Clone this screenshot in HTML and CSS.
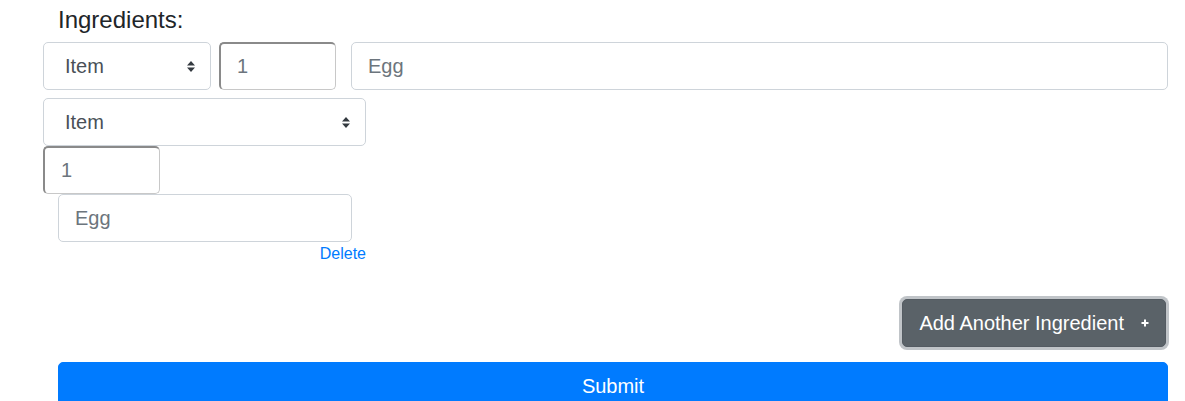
FILE: index.html
```html
<!DOCTYPE html>
<html>
<head>
<meta charset="utf-8">
<link rel="stylesheet" href="styles.css">
</head>
<body>
<form class="page">
  <label class="title">Ingredients:</label>

  <div class="row-wide">
    <span class="select-wrap sel-sm">
      <select class="field select"><option>Item</option></select>
      <svg class="caret" width="8" height="11" viewBox="0 0 8 11"><path d="M4 0 L8 4.5 L0 4.5 Z M4 11 L8 6.5 L0 6.5 Z" fill="#343a40"/></svg>
    </span>
    <input class="field qty" type="text" placeholder="1">
    <input class="field name grow" type="text" placeholder="Egg">
  </div>

  <div class="stack">
    <span class="select-wrap sel-lg">
      <select class="field select"><option>Item</option></select>
      <svg class="caret" width="8" height="11" viewBox="0 0 8 11"><path d="M4 0 L8 4.5 L0 4.5 Z M4 11 L8 6.5 L0 6.5 Z" fill="#343a40"/></svg>
    </span>
    <input class="field qty" type="text" placeholder="1">
    <input class="field name short" type="text" placeholder="Egg">
    <a class="delete" href="#">Delete</a>
  </div>

  <div class="actions">
    <button type="button" class="btn btn-add">Add Another Ingredient
      <svg class="plus" width="8" height="8" viewBox="0 0 8 8"><path d="M4 0.5 V7.5 M0.5 4 H7.5" stroke="#fff" stroke-width="2"/></svg>
    </button>
  </div>

  <button type="button" class="btn btn-submit">Submit</button>
</form>
</body>
</html>
```

FILE: styles.css
```css
* { box-sizing: border-box; }
body {
  margin: 0;
  background: #fff;
  font-family: "Liberation Sans", Arial, sans-serif;
  color: #212529;
}
.page {
  width: 1168px;
  padding-left: 43px;
  display: flex;
  flex-direction: column;
}
.title {
  display: block;
  margin: 5px 0 8px 15px;
  font-size: 24px;
  line-height: 29px;
  color: #212529;
}
.field {
  height: 48px;
  font-family: inherit;
  font-size: 20px;
  color: #495057;
  background: #fff;
  border: 1px solid #ced4da;
  border-radius: 5px;
  padding: 0 16px;
  outline: none;
  margin: 0;
}
.field::placeholder { color: #6c757d; opacity: 1; }
.select {
  -webkit-appearance: none;
  appearance: none;
  width: 100%;
  padding-left: 21px;
  color: #495057;
}
.select-wrap { position: relative; display: block; }
.caret { position: absolute; right: 16px; top: 19px; pointer-events: none; }
.sel-sm { width: 168px; flex: none; }
.sel-lg { width: 323px; }
.qty {
  width: 117px;
  flex: none;
  border-top: 2px solid #8a8a8a;
  border-left: 2px solid #8a8a8a;
  border-right: 1px solid #c8c8c8;
  border-bottom: 1px solid #c8c8c8;
  padding-left: 16px;
}
.row-wide {
  display: flex;
  align-items: center;
}
.row-wide .qty { margin-left: 8px; }
.row-wide .grow { flex: 1; margin-left: 15px; }
.stack {
  display: flex;
  flex-direction: column;
  align-items: flex-start;
  margin-top: 8px;
  width: 323px;
}
.short { width: 294px; margin-left: 15px; }
.delete {
  align-self: flex-end;
  font-size: 16px;
  line-height: 24px;
  color: #007bff;
  text-decoration: none;
}
.actions {
  display: flex;
  justify-content: flex-end;
  margin-top: 33px;
}
.btn {
  font-family: inherit;
  font-size: 20px;
  line-height: 30px;
  height: 48px;
  border-radius: 5px;
  padding: 8px 16px;
  color: #fff;
  cursor: pointer;
}
.btn-add {
  background: #5a6268;
  border: 1px solid #545b62;
  box-shadow: 0 0 0 3px rgba(130, 138, 145, 0.5);
  margin-right: 2px;
  display: flex;
  align-items: center;
}
.plus { margin-left: 17px; }
.btn-submit {
  margin: 15px 0 0 15px;
  width: 1110px;
  background: #007bff;
  border: 1px solid #007bff;
}
```
